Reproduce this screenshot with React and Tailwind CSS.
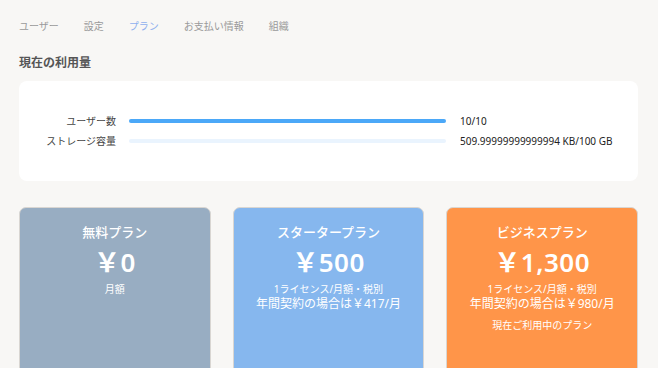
import React from "react";

const tabs = ["ユーザー", "設定", "プラン", "お支払い情報", "組織"];

const usage = [
  { label: "ユーザー数", pct: 100, value: "10/10" },
  { label: "ストレージ容量", pct: 0, value: "509.99999999999994 KB/100 GB" },
];

const plans = [
  { name: "無料プラン", price: "￥0", note: "月額", bg: "bg-[#98adc2]" },
  {
    name: "スタータープラン",
    price: "￥500",
    note: "1ライセンス/月額・税別",
    yearly: "年間契約の場合は￥417/月",
    bg: "bg-[#86b7ee]",
  },
  {
    name: "ビジネスプラン",
    price: "￥1,300",
    note: "1ライセンス/月額・税別",
    yearly: "年間契約の場合は￥980/月",
    current: true,
    bg: "bg-[#ff9549]",
  },
];

export default function App() {
  return (
    <div
      className="w-[658px] h-[368px] overflow-hidden bg-[#f8f7f5] pl-[19px] pr-[20px]"
      style={{ fontFamily: '"Noto Sans", "Noto Sans CJK JP", sans-serif' }}
    >
      <nav className="flex gap-[25px] pt-[18px] text-[10px] leading-[16px] text-[#9a9a9a]">
        {tabs.map((t) => (
          <span key={t} className={t === "プラン" ? "text-[#8fb0ee]" : ""}>
            {t}
          </span>
        ))}
      </nav>

      <h2 className="mt-[20px] text-[12px] leading-[18px] font-bold text-[#555]">
        現在の利用量
      </h2>

      <div className="mt-[9px] h-[100px] rounded-[8px] bg-white flex flex-col justify-center gap-[4px]">
        {usage.map((u) => (
          <div key={u.label} className="flex items-center h-[16px]">
            <span className="w-[97px] text-right text-[10px] text-[#444]">{u.label}</span>
            <div className="ml-[13px] w-[317px] h-[4px] rounded-full bg-[#eaf4fe]">
              <div className="h-full rounded-full bg-[#4ba8f8]" style={{ width: u.pct + "%" }} />
            </div>
            <span className="ml-[14px] text-[10px] text-[#222]">{u.value}</span>
          </div>
        ))}
      </div>

      <div className="mt-[26px] grid grid-cols-3 gap-[22px]">
        {plans.map((p) => (
          <div
            key={p.name}
            className={`${p.bg} h-[180px] rounded-[7px] border border-[#d9d6d2] flex flex-col items-center text-white pt-[14px]`}
          >
            <div className="text-[13px] leading-[20px] font-medium">{p.name}</div>
            <div className="mt-[2px] text-[26px] leading-[36px] font-semibold tracking-[0.5px]">{p.price}</div>
            <div className="mt-[2px] text-[10px] leading-[14px]">{p.note}</div>
            {p.yearly && <div className="text-[12px] leading-[16px]">{p.yearly}</div>}
            {p.current && <div className="mt-[6px] text-[10px] leading-[14px]">現在ご利用中のプラン</div>}
          </div>
        ))}
      </div>
    </div>
  );
}
